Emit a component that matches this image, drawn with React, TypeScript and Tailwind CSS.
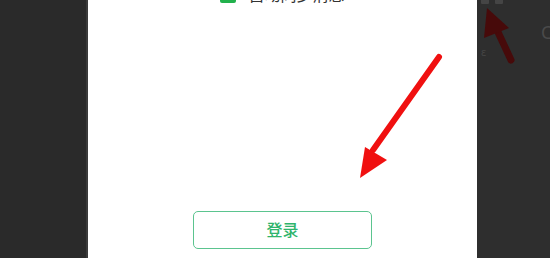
import React from "react";

export default function App() {
  return (
    <div
      className="flex w-[550px] h-[258px] overflow-hidden"
      style={{ fontFamily: '"Noto Sans", "Noto Sans CJK SC", sans-serif' }}
    >
      {/* left dimmed area */}
      <div className="w-[88px] shrink-0 bg-[#2a2a2a] border-r-2 border-[#3b3b3b]" />

      {/* dialog sheet */}
      <div className="relative w-[389px] shrink-0 bg-white flex flex-col items-center">
        <div className="flex items-center gap-3 -mt-[13px]">
          <span className="w-4 h-4 rounded-[2px] bg-[#22b14c]" />
          <span className="text-[16px] leading-4 text-[#333]">自动同步消息</span>
        </div>

        {/* red annotation arrow */}
        <svg
          className="absolute left-0 top-0"
          width="389"
          height="258"
          viewBox="0 0 389 258"
        >
          <line
            x1="351"
            y1="57"
            x2="285"
            y2="150"
            stroke="#f01010"
            strokeWidth="6"
            strokeLinecap="round"
          />
          <polygon points="272,178 277,147 299,160" fill="#f01010" />
        </svg>

        <button className="mt-auto mb-[9px] w-[179px] h-[38px] border border-[#5bc48f] rounded-[5px] text-[16px] font-medium text-[#2fb46c] bg-white">
          登录
        </button>
      </div>

      {/* right dimmed area */}
      <div className="relative flex-1 bg-[#2e2e2e]">
        <div className="flex gap-[6px] pl-[4px] -mt-[4px]">
          <span className="w-2 h-2 rounded-[1px] bg-[#454545]" />
          <span className="w-2 h-2 rounded-[1px] bg-[#454545]" />
        </div>
        <svg className="absolute left-0 top-0" width="73" height="80" viewBox="0 0 73 80">
          <line
            x1="34"
            y1="60"
            x2="20"
            y2="30"
            stroke="#470a0a"
            strokeWidth="7"
            strokeLinecap="round"
          />
          <polygon points="10,8 7,38 32,28" fill="#470a0a" />
        </svg>
        <span className="absolute left-[64px] top-[22px] text-[18px] text-[#4a4a4a] leading-5">C</span>
        <span className="absolute left-[4px] top-[46px] text-[11px] text-[#454545] leading-3">ε</span>
      </div>
    </div>
  );
}
